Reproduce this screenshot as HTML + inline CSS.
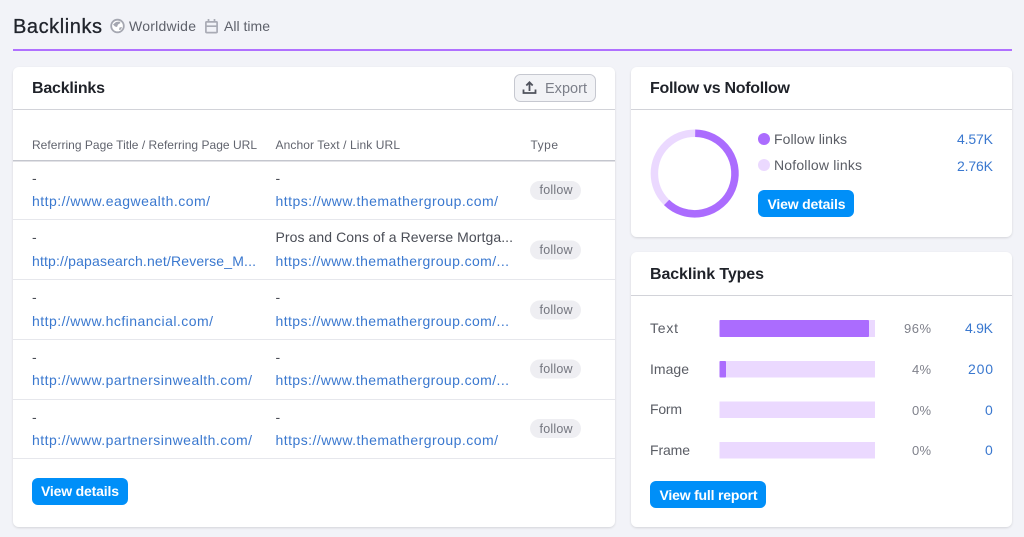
<!DOCTYPE html>
<html><head><meta charset="utf-8"><title>Backlinks</title>
<style>
html,body{margin:0;padding:0;background:#f2f3f8;width:1024px;height:537px;overflow:hidden}
svg{display:block;font-family:"Liberation Sans",sans-serif}
.h{font-weight:bold;font-size:16px;fill:#1f2229}
.th{font-size:12px;fill:#61646e}
.u{font-size:14px;fill:#3a78cf}
.d{font-size:14px;fill:#4a4d56}
.g{font-size:14px;fill:#5a5d65}
.p{font-size:12.5px;fill:#74767f}
.b{font-size:14px;font-weight:bold;fill:#fff}
.n{font-size:14px;fill:#3a78cf}
.pc{font-size:13px;fill:#7f818b}
.line{fill:#e6e7ec}
.pill{fill:#eeeef2}
.btn{fill:#008ff8}
.lt{fill:#ebd9ff}
.pu{fill:#ab6cfe}
</style></head><body>
<svg width="1024" height="537" viewBox="0 0 1024 537" xmlns="http://www.w3.org/2000/svg">
<defs><filter id="s" x="-5%" y="-5%" width="110%" height="110%"><feDropShadow dx="0" dy="1" stdDeviation="1" flood-color="#000" flood-opacity=".13"/></filter></defs>
<rect width="1024" height="537" fill="#f2f3f8"/>

<text x="13" y="33" font-size="20" fill="#21242c" stroke="#21242c" stroke-width=".3" textLength="89">Backlinks</text>
<circle cx="117.500" cy="26" r="6.300" fill="#fff" stroke="#a5a7b1" stroke-width="1.800"/>
<path d="M113 24.500l3-2.500 3.500-.5 1 1.500-2.500 1.500-1 2.500-2-.5zM119.500 27.500l2.500-.5-1 2.500-2 .5z" fill="#a5a7b1"/>
<text x="129" y="31" font-size="14" fill="#5e616b" textLength="67">Worldwide</text>
<g fill="none" stroke="#a9abb5" stroke-width="1.700">
<rect x="205.900" y="21.900" width="11.200" height="10.700" rx=".8"/>
<path d="M205.900 26.200h11.200M208.500 19v3.500M214.500 19v3.500"/>
</g>
<text x="224" y="31" font-size="14" fill="#5e616b" textLength="46">All time</text>
<rect x="13" y="49" width="999" height="2" fill="#b070ff"/>

<!-- left card -->
<rect x="13" y="67" width="602" height="460" rx="6" fill="#fff" filter="url(#s)"/>
<rect x="13" y="109" width="602" height="1" fill="#d2d3d9"/>
<text class="h" x="32" y="93" textLength="73">Backlinks</text>
<rect x="514.500" y="74.500" width="81" height="27" rx="6" fill="#f2f3f6" stroke="#c6c8d0"/>
<g fill="none" stroke="#4f525c" stroke-width="1.800">
<path d="M529.500 91V83M526.300 85.500l3.200-3.200 3.200 3.200M523.500 89.500v3.500h12v-3.500"/>
</g>
<text x="545" y="93" font-size="14.500" fill="#7c7f89" textLength="42">Export</text>

<text class="th" x="32" y="149" textLength="225">Referring Page Title / Referring Page URL</text>
<text class="th" x="275.500" y="149" textLength="124.500">Anchor Text / Link URL</text>
<text class="th" x="530.500" y="149" textLength="27.500">Type</text>
<rect x="13" y="160" width="602" height="1.500" fill="#c4c6ce"/>

<text class="d" x="32" y="183">-</text>
<text class="u" x="32" y="206" textLength="178">http://www.eagwealth.com/</text>
<text class="d" x="275.500" y="183">-</text>
<text class="u" x="275.500" y="206" textLength="222.500">https://www.themathergroup.com/</text>
<rect class="pill" x="530" y="181" width="51" height="19" rx="9.500"/>
<text class="p" x="539.500" y="194" textLength="33">follow</text>
<rect class="line" x="13" y="219" width="602" height="1"/>

<text class="d" x="32" y="242">-</text>
<text class="u" x="32" y="266" textLength="224">http://papasearch.net/Reverse_M...</text>
<text class="d" x="275.500" y="242" textLength="237.500">Pros and Cons of a Reverse Mortga...</text>
<text class="u" x="275.500" y="266" textLength="233.500">https://www.themathergroup.com/...</text>
<rect class="pill" x="530" y="240.500" width="51" height="19" rx="9.500"/>
<text class="p" x="539.500" y="254" textLength="33">follow</text>
<rect class="line" x="13" y="279" width="602" height="1"/>

<text class="d" x="32" y="302">-</text>
<text class="u" x="32" y="326" textLength="181">http://www.hcfinancial.com/</text>
<text class="d" x="275.500" y="302">-</text>
<text class="u" x="275.500" y="326" textLength="233.500">https://www.themathergroup.com/...</text>
<rect class="pill" x="530" y="300.500" width="51" height="19" rx="9.500"/>
<text class="p" x="539.500" y="314" textLength="33">follow</text>
<rect class="line" x="13" y="339" width="602" height="1"/>

<text class="d" x="32" y="362">-</text>
<text class="u" x="32" y="385" textLength="220">http://www.partnersinwealth.com/</text>
<text class="d" x="275.500" y="362">-</text>
<text class="u" x="275.500" y="385" textLength="233.500">https://www.themathergroup.com/...</text>
<rect class="pill" x="530" y="359.500" width="51" height="19" rx="9.500"/>
<text class="p" x="539.500" y="373" textLength="33">follow</text>
<rect class="line" x="13" y="399" width="602" height="1"/>

<text class="d" x="32" y="422">-</text>
<text class="u" x="32" y="445" textLength="220">http://www.partnersinwealth.com/</text>
<text class="d" x="275.500" y="422">-</text>
<text class="u" x="275.500" y="445" textLength="222.500">https://www.themathergroup.com/</text>
<rect class="pill" x="530" y="419" width="51" height="19" rx="9.500"/>
<text class="p" x="539.500" y="433" textLength="33">follow</text>
<rect class="line" x="13" y="458" width="602" height="1"/>

<rect class="btn" x="32" y="478" width="96" height="27" rx="6"/>
<text class="b" x="41" y="496" textLength="78">View details</text>

<!-- follow card -->
<rect x="631" y="67" width="381" height="170" rx="6" fill="#fff" filter="url(#s)"/>
<rect x="631" y="109" width="381" height="1" fill="#d2d3d9"/>
<text class="h" x="650" y="93" textLength="140">Follow vs Nofollow</text>
<circle cx="694.700" cy="173.500" r="40.300" fill="none" stroke="#ebd9ff" stroke-width="7.500"/>
<path d="M695.200 133.200A40.300 40.300 0 1 1 666.600 202.400" fill="none" stroke="#ab6cfe" stroke-width="7.500"/>
<circle class="pu" cx="764" cy="139" r="6"/>
<circle class="lt" cx="764" cy="165" r="6"/>
<text class="g" x="774" y="144" textLength="73">Follow links</text>
<text class="g" x="774" y="170" textLength="88">Nofollow links</text>
<text class="n" x="957" y="144" textLength="36">4.57K</text>
<text class="n" x="957" y="171" textLength="36">2.76K</text>
<rect class="btn" x="758" y="190" width="96" height="27" rx="6"/>
<text class="b" x="767.500" y="209" textLength="78">View details</text>

<!-- types card -->
<rect x="631" y="252" width="381" height="275" rx="6" fill="#fff" filter="url(#s)"/>
<rect x="631" y="295" width="381" height="1" fill="#d2d3d9"/>
<text class="h" x="650" y="279" textLength="114">Backlink Types</text>

<text class="g" x="650" y="333" textLength="28">Text</text>
<rect class="lt" x="719.500" y="320" width="155.500" height="17"/>
<rect class="pu" x="719.500" y="320" width="149.500" height="17" rx="1"/>
<text class="pc" x="904" y="333" textLength="27">96%</text>
<text class="n" x="965" y="333" textLength="28">4.9K</text>

<text class="g" x="650" y="374" textLength="39">Image</text>
<rect class="lt" x="719.500" y="361" width="155.500" height="16.500"/>
<rect class="pu" x="719.500" y="361" width="6.500" height="16.500" rx="1"/>
<text class="pc" x="912" y="374" textLength="19">4%</text>
<text class="n" x="968" y="374" textLength="25">200</text>

<text class="g" x="650" y="414" textLength="32">Form</text>
<rect class="lt" x="719.500" y="401.500" width="155.500" height="16.500"/>
<text class="pc" x="912" y="415" textLength="19">0%</text>
<text class="n" x="985" y="415" textLength="8">0</text>

<text class="g" x="650" y="455" textLength="40">Frame</text>
<rect class="lt" x="719.500" y="442" width="155.500" height="16.500"/>
<text class="pc" x="912" y="455" textLength="19">0%</text>
<text class="n" x="985" y="455" textLength="8">0</text>

<rect class="btn" x="650" y="481" width="116" height="27" rx="6"/>
<text class="b" x="659.500" y="500" textLength="98">View full report</text>
</svg>
</body></html>
